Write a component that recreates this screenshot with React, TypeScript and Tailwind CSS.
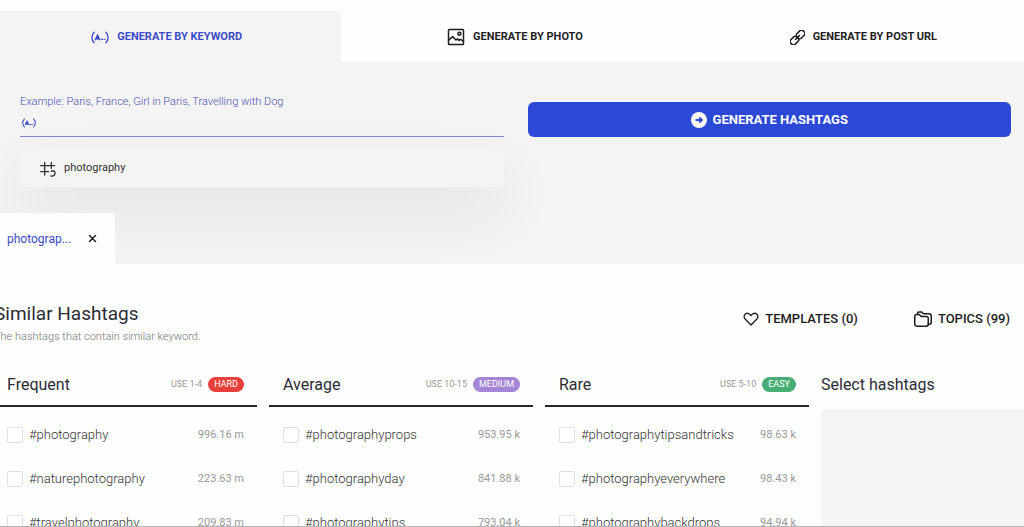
import type { ReactNode } from 'react';

type Tag = [name: string, posts: string];

const columns: { title: string; use: string; level: string; badge: string; tags: Tag[] }[] = [
  {
    title: 'Frequent',
    use: 'USE 1-4',
    level: 'HARD',
    badge: 'bg-[#e8413c]',
    tags: [['#photography', '996.16 m'], ['#naturephotography', '223.63 m'], ['#travelphotography', '209.83 m']],
  },
  {
    title: 'Average',
    use: 'USE 10-15',
    level: 'MEDIUM',
    badge: 'bg-[#a685d6]',
    tags: [['#photographyprops', '953.95 k'], ['#photographyday', '841.88 k'], ['#photographytips', '793.04 k']],
  },
  {
    title: 'Rare',
    use: 'USE 5-10',
    level: 'EASY',
    badge: 'bg-[#48ad74]',
    tags: [['#photographytipsandtricks', '98.63 k'], ['#photographyeverywhere', '98.43 k'], ['#photographybackdrops', '94.94 k']],
  },
];

function Icon({ className, children }: { className: string; children: ReactNode }) {
  return (
    <svg
      viewBox="0 0 24 24"
      className={className}
      fill="none"
      stroke="currentColor"
      strokeWidth="2"
      strokeLinecap="round"
      strokeLinejoin="round"
      aria-hidden="true"
    >
      {children}
    </svg>
  );
}

// letter, dash and dot between two round brackets
function KeywordIcon({ className }: { className: string }) {
  return (
    <svg viewBox="0 0 20 14" className={className} fill="none" stroke="currentColor" strokeWidth="1.5" strokeLinecap="round" aria-hidden="true">
      <path d="M3.500 1.200C.2 4.500.2 9.500 3.500 12.800M16.500 1.200c3.300 3.300 3.300 8.300 0 11.600" />
      <path d="M5 9.300 7.200 4.700l2.300 4.600M6 8.200h2.600" strokeWidth="1.800" />
      <path d="M11.600 9h1.600M15.300 9h.3" strokeWidth="1.500" />
    </svg>
  );
}

function PhotoIcon() {
  return (
    <Icon className="size-[18px]">
      <rect x="2" y="2" width="20" height="20" rx="1" />
      <circle cx="16.500" cy="7.500" r="2" />
      <path d="m2.500 16 5-4.500 4.500 4.500 2-1.500 2 2 2-1.500 3.500 2.500" />
    </Icon>
  );
}

function LinkIcon() {
  return (
    <Icon className="size-[15px]">
      <g transform="rotate(-45 12 12)" strokeWidth="2.400">
        <rect x="-2" y="7" width="14" height="10" rx="4" />
        <rect x="12" y="7" width="14" height="10" rx="4" />
        <path d="M7.500 12h9" />
      </g>
    </Icon>
  );
}

function HashIcon() {
  return (
    <Icon className="size-4">
      <path d="M7 2v19M17 2v9M1 7h21M1 16h12" />
      <path d="M17 15.500c3-2 6 0 5.500 3-.500 3-3 4.500-6 4" />
    </Icon>
  );
}

function FolderIcon() {
  return (
    <Icon className="size-[18px]">
      <path d="M1 8.500A2.500 2.500 0 0 1 3.500 6H7l2.500 2.500h7A2.500 2.500 0 0 1 19 11v8a2.500 2.500 0 0 1-2.500 2.500h-13A2.500 2.500 0 0 1 1 19z" />
      <path d="M4.500 6V4.500A2 2 0 0 1 6.500 2.500h3.500L12.500 5H20a3 3 0 0 1 3 3v8.500a2.500 2.500 0 0 1-4 2" />
    </Icon>
  );
}

export default function App() {
  return (
    <div className="flex h-screen flex-col overflow-hidden border-b border-[#b5b5b5] bg-[#fefefe] pt-[11px] font-[Roboto,sans-serif] text-[#2c2c34]">
      <nav className="grid h-[51px] shrink-0 grid-cols-3 text-[11px] font-bold text-[#1d1d1f]">
        <button className="flex items-center justify-center gap-2 bg-[#f4f4f4] pt-px pr-2 text-[#3b4cc8]">
          <KeywordIcon className="h-[13px] w-[18px]" />
          GENERATE BY KEYWORD
        </button>
        <button className="flex items-center justify-center gap-2 pt-px pl-1.5">
          <PhotoIcon />
          GENERATE BY PHOTO
        </button>
        <button className="flex items-center justify-center gap-2 pt-px pl-5">
          <LinkIcon />
          GENERATE BY POST URL
        </button>
      </nav>

      <section className="flex h-[202px] shrink-0 flex-col justify-between bg-[#f4f4f4]">
        <form className="grid grid-cols-2 gap-6 pt-[33px] pr-[13px] pl-5">
          <div>
            <label htmlFor="keyword" className="block text-[11px] leading-[14px] font-light text-[#4b52b5]">
              Example: Paris, France, Girl in Paris, Travelling with Dog
            </label>
            <div className="flex h-7 items-center gap-2 border-b border-[#7c87cf] pl-[2px] text-[#3b4cc8]">
              <KeywordIcon className="h-[10px] w-[14px]" />
              <input id="keyword" type="text" className="h-full min-w-0 flex-1 bg-transparent text-[11px] outline-none" />
            </div>
            <button
              type="button"
              className="mt-3 flex h-[38px] w-full items-center gap-2 rounded-sm bg-[#f4f4f4] pt-px pl-5 text-[11px] text-[#333] shadow-[0_24px_64px_rgba(0,0,20,0.09)]"
            >
              <HashIcon />
              photography
            </button>
          </div>
          <button
            type="submit"
            className="mt-[7px] flex h-[35px] items-center justify-center gap-1.5 rounded-md bg-[#2c48d6] text-[13px] font-bold text-white"
          >
            <svg viewBox="0 0 16 16" className="size-4" aria-hidden="true">
              <circle cx="8" cy="8" r="8" fill="currentColor" />
              <path d="M4.500 8h6M8.300 5.500 11 8l-2.700 2.500" fill="none" stroke="#2c48d6" strokeWidth="1.800" />
            </svg>
            GENERATE HASHTAGS
          </button>
        </form>
        <div className="relative flex h-[51px] w-[115px] items-center justify-between bg-[#fefefe]/90 pr-[18px] pl-[7px] text-xs text-[#3b4cc8]">
          photograp...
          <button aria-label="Close photography" className="text-[#222]">
            <Icon className="size-[9px]">
              <path d="m4 4 16 16M20 4 4 20" strokeWidth="4" />
            </Icon>
          </button>
        </div>
      </section>

      <header className="flex shrink-0 items-start justify-between pt-[38px] pr-[14px]">
        <div className="-ml-[6px]">
          <h1 className="text-[19px] leading-6">Similar Hashtags</h1>
          <p className="mt-[3px] text-[11px] leading-4 font-light text-[#777]">The hashtags that contain similar keyword.</p>
        </div>
        <div className="flex gap-14 pt-2 text-[13px] leading-[18px] font-medium text-[#1d1d1f]">
          <button className="flex items-center gap-1.5">
            <Icon className="size-4">
              <path d="M12 21 3.500 12.500C-.500 8 3 2.500 7.500 3.500 10 4 11.500 6 12 7c.500-1 2-3 4.500-3.500C21 2.500 24.500 8 20.500 12.500z" />
            </Icon>
            TEMPLATES (0)
          </button>
          <button className="flex items-center gap-1.5">
            <FolderIcon />
            TOPICS (99)
          </button>
        </div>
      </header>

      <main className="-ml-[7px] grid shrink-0 grid-cols-[1fr_1fr_1fr_203px] gap-3 pt-[19px]">
        {columns.map((col) => (
          <section key={col.title}>
            <div className="flex h-[43px] items-center border-b-2 border-[#26262b] pr-[13px] pl-[14px]">
              <h2 className="flex-1 text-base">{col.title}</h2>
              <span className="text-[9px] text-[#999]">{col.use}</span>
              <span className={`ml-[6px] rounded-full px-[6px] text-[9px] leading-[15px] text-white ${col.badge}`}>{col.level}</span>
            </div>
            <ul className="pt-1.5">
              {col.tags.map(([name, posts]) => (
                <li key={name}>
                  <label className="flex h-11 items-center pr-[13px] pl-[14px] text-[13px]">
                    <input type="checkbox" className="size-4 appearance-none rounded-xs border border-[#e0e0e0] bg-white" />
                    <span className="ml-[6px] flex-1 font-light text-[#333]">{name}</span>
                    <span className="text-[11px] text-[#999]">{posts}</span>
                  </label>
                </li>
              ))}
            </ul>
          </section>
        ))}
        <aside className="flex flex-col">
          <h2 className="mb-0.5 flex h-[43px] items-center pb-0.5 text-base">Select hashtags</h2>
          <div className="flex-1 rounded-tl-md bg-[#f4f4f4]" />
        </aside>
      </main>
    </div>
  );
}
